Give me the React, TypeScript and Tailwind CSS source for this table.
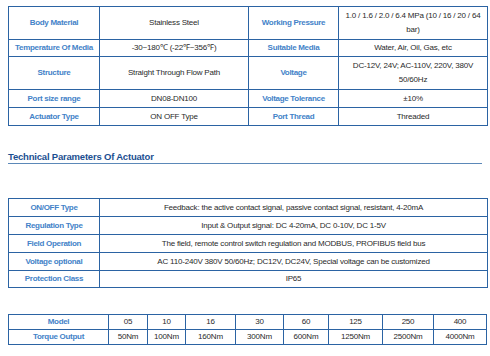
const font = { fontFamily: '"Liberation Sans", Arial, sans-serif' }

const specs: [string, React.ReactNode, string, React.ReactNode][] = [
  ['Body Material', 'Stainless Steel', 'Working Pressure', <>1.0 / 1.6 / 2.0 / 6.4 MPa (10 / 16 / 20 / 64<br />bar)</>],
  ['Temperature Of Media', '-30~180℃ (-22℉~356℉)', 'Suitable Media', 'Water, Air, Oil, Gas, etc'],
  ['Structure', 'Straight Through Flow Path', 'Voltage', <>DC-12V, 24V; AC-110V, 220V, 380V<br />50/60Hz</>],
  ['Port size range', 'DN08-DN100', 'Voltage Tolerance', '±10%'],
  ['Actuator Type', 'ON OFF Type', 'Port Thread', 'Threaded'],
]

const actuator = [
  ['ON/OFF Type', 'Feedback: the active contact signal, passive contact signal, resistant, 4-20mA'],
  ['Regulation Type', 'Input & Output signal: DC 4-20mA, DC 0-10V, DC 1-5V'],
  ['Field Operation', 'The field, remote control switch regulation and MODBUS, PROFIBUS field bus'],
  ['Voltage optional', 'AC 110-240V 380V 50/60Hz; DC12V, DC24V, Special voltage can be customized'],
  ['Protection Class', 'IP65'],
]

const models = ['05', '10', '16', '30', '60', '125', '250', '400']
const torques = ['50Nm', '100Nm', '160Nm', '300Nm', '600Nm', '1250Nm', '2500Nm', '4000Nm']

function Label({ children }: { children: React.ReactNode }) {
  return (
    <div className="bg-white flex items-center justify-center text-center text-[8px] font-bold tracking-[-0.3px] text-[#4382c8] leading-[12px]">
      {children}
    </div>
  )
}

function Value({ children }: { children: React.ReactNode }) {
  return (
    <div className="bg-white flex items-center justify-center text-center text-[8px] tracking-[-0.2px] text-[#2a2a2a] leading-[14px] px-1">
      {children}
    </div>
  )
}

export default function App() {
  return (
    <div className="w-[490px] h-[356px] bg-white flex flex-col pl-[8px] pt-[6px]" style={font}>
      <div className="grid w-[480px] grid-cols-[90px_148px_89px_148px] grid-rows-[32px_16px_32px_17px_17px] gap-px p-px bg-[#2b63a3]">
        {specs.map(([a, b, c, d], i) => (
          <div key={i} className="contents">
            <Label>{a}</Label>
            <Value>{b}</Value>
            <Label>{c}</Label>
            <Value>{d}</Value>
          </div>
        ))}
      </div>

      <h2 className="mt-[25px] w-[474px] h-[13px] border-b border-[#5b88b8] text-[9.5px] font-bold leading-[12px] tracking-[-0.2px] text-[#1b4f91]">
        Technical Parameters Of Actuator
      </h2>

      <div className="mt-[34px] grid w-[480px] grid-cols-[90px_1fr] grid-rows-[17px_17px_17px_17px_16px] gap-px p-px bg-[#2b63a3]">
        {actuator.map(([a, b]) => (
          <div key={a} className="contents">
            <Label>{a}</Label>
            <Value>{b}</Value>
          </div>
        ))}
      </div>

      <div className="mt-[26px] grid w-[479px] grid-cols-[99px_38px_37px_49px_47px_44px_53px_50px_52px] grid-rows-[14px_14px] gap-px p-px bg-[#2b63a3]">
        <Label>Model</Label>
        {models.map((m) => (
          <Value key={m}>{m}</Value>
        ))}
        <Label>Torque Output</Label>
        {torques.map((t) => (
          <Value key={t}>{t}</Value>
        ))}
      </div>
    </div>
  )
}
